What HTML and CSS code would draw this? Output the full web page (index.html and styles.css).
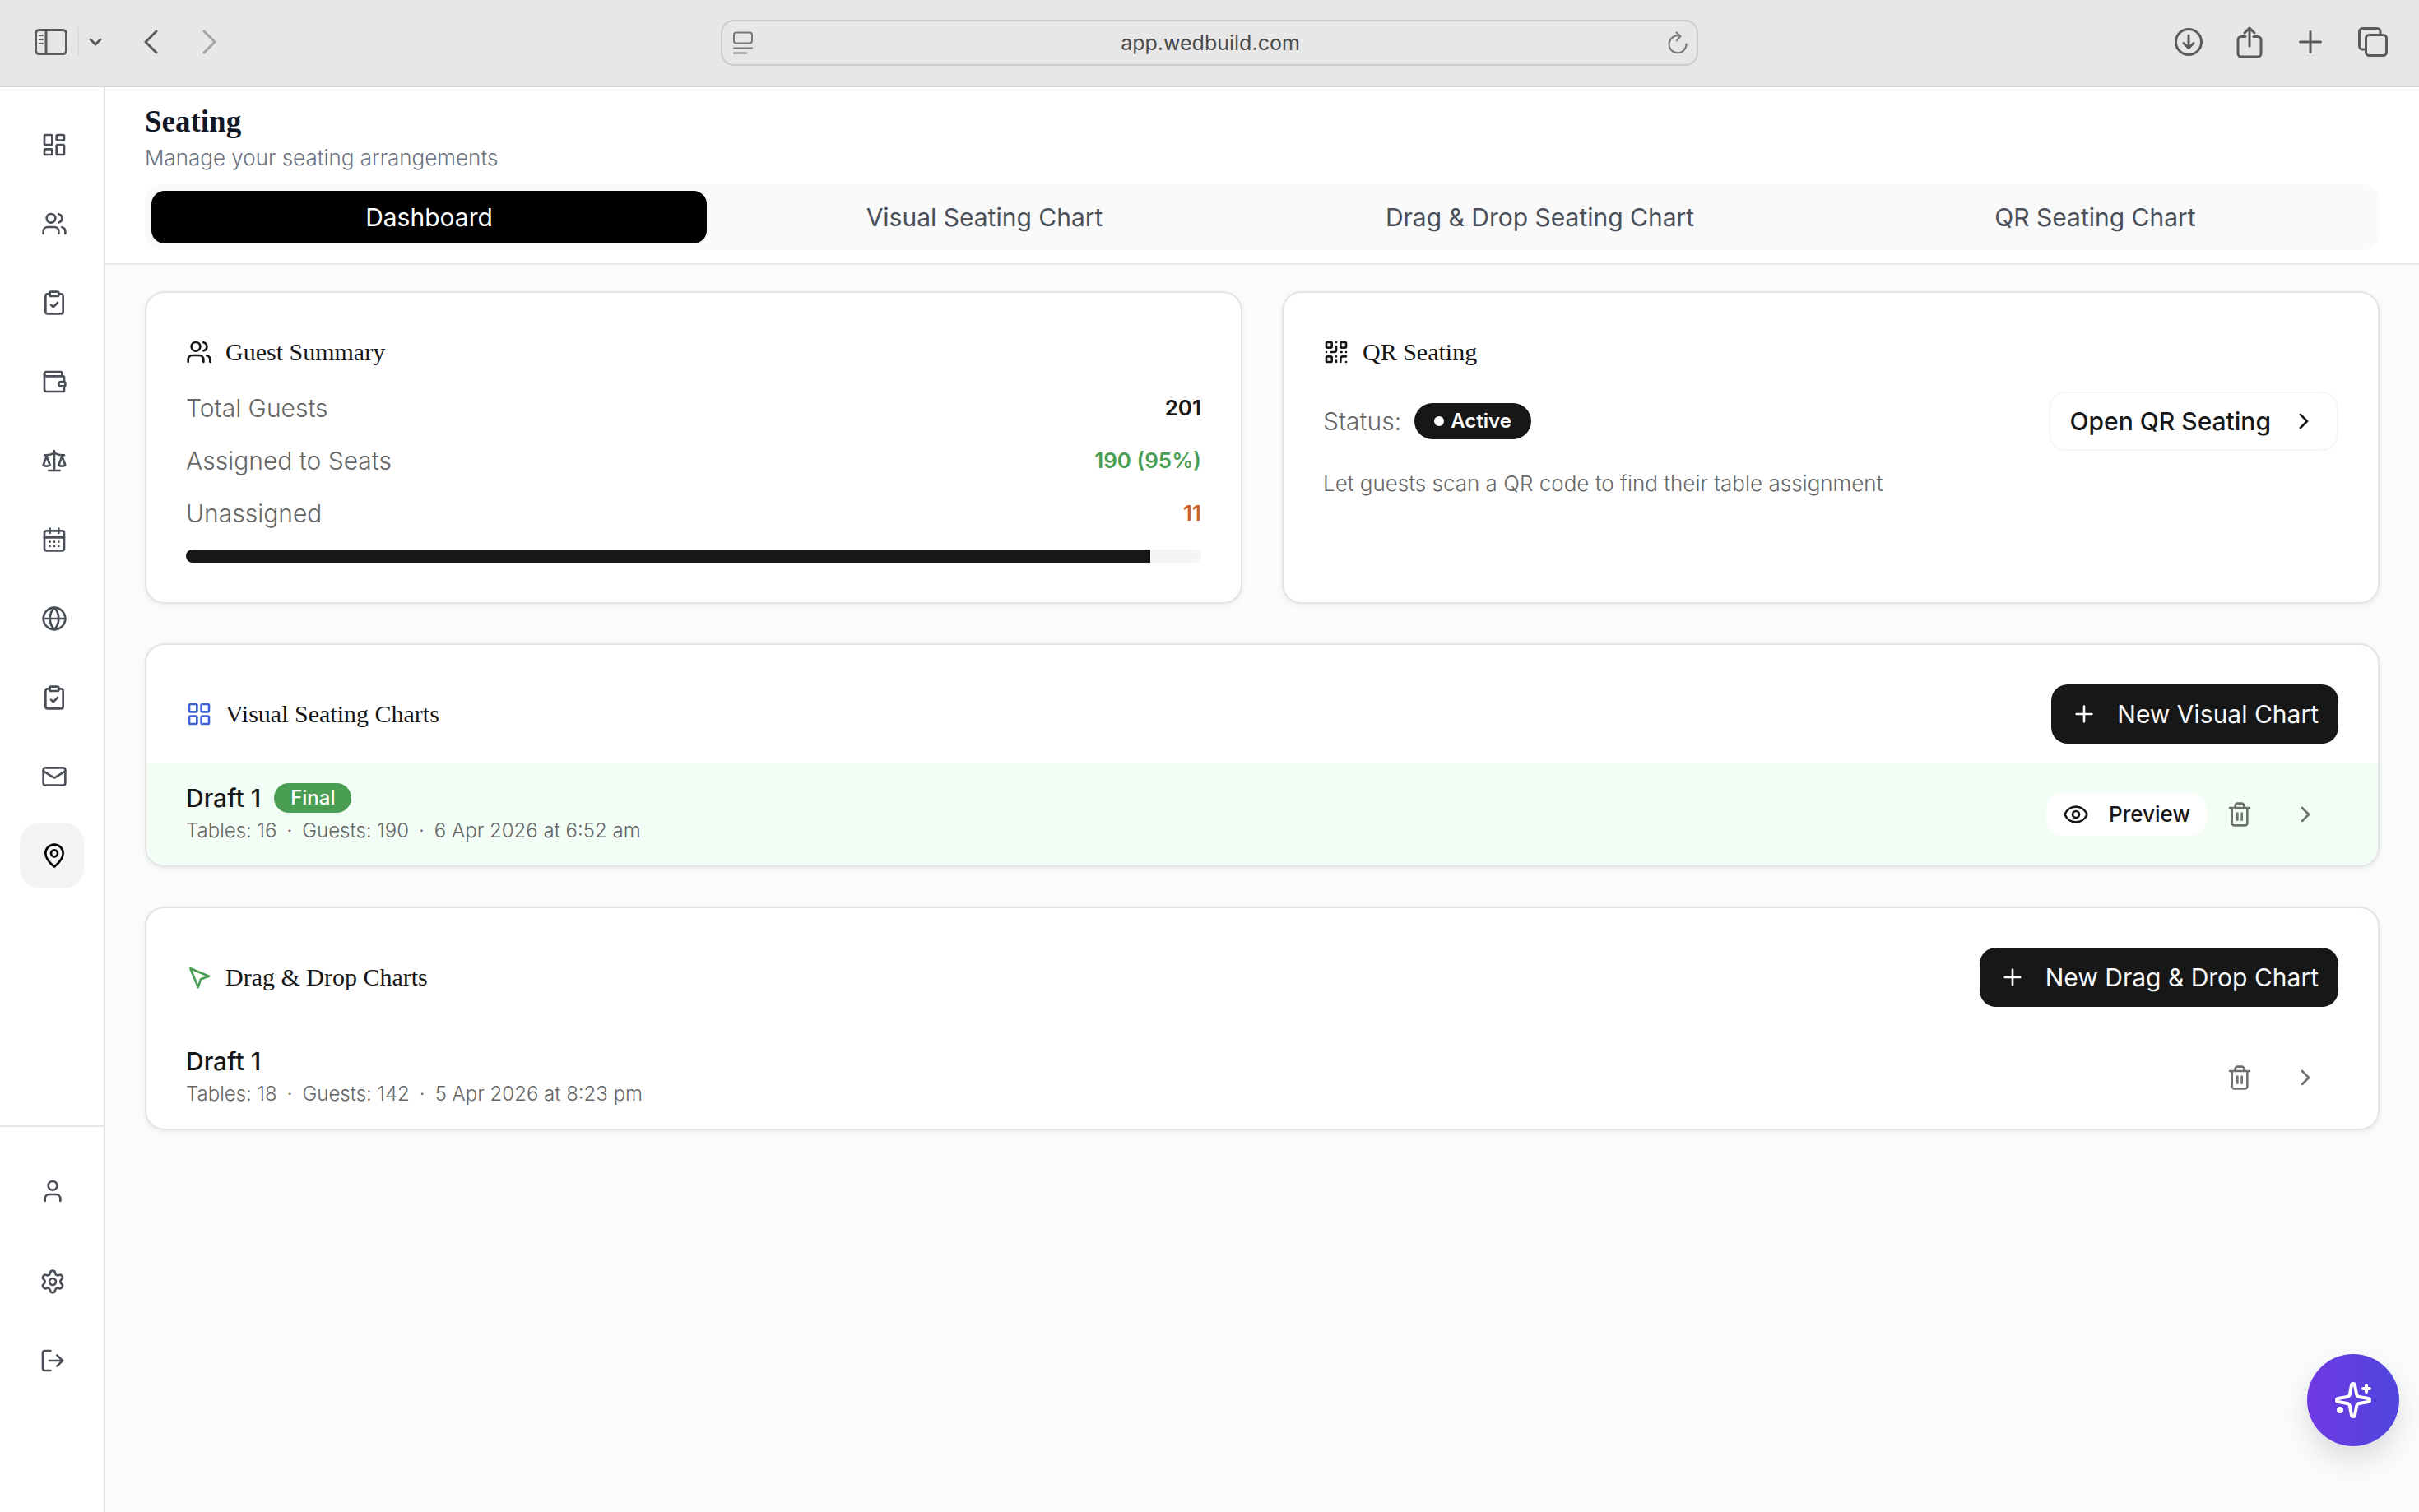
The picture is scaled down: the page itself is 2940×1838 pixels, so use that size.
FILE: index.html
```html
<!DOCTYPE html>
<html lang="en">
  <head>
    <meta charset="UTF-8" />
    <meta name="viewport" content="width=device-width, initial-scale=1.0" />
    <title>Seating</title>
    <link rel="stylesheet" href="styles.css">
  </head>
  <body>
    <!-- Shared icons -->
    <svg class="sprite" aria-hidden="true">
      <symbol id="i-dashboard" viewBox="0 0 24 24"><rect width="7" height="9" x="3" y="3" rx="1" /><rect width="7" height="5" x="14" y="3" rx="1" /><rect width="7" height="9" x="14" y="12" rx="1" /><rect width="7" height="5" x="3" y="16" rx="1" /></symbol>
      <symbol id="i-users" viewBox="0 0 24 24"><path d="M16 21v-2a4 4 0 0 0-4-4H6a4 4 0 0 0-4 4v2" /><circle cx="9" cy="7" r="4" /><path d="M22 21v-2a4 4 0 0 0-3-3.87" /><path d="M16 3.13a4 4 0 0 1 0 7.75" /></symbol>
      <symbol id="i-clipboard" viewBox="0 0 24 24"><rect width="8" height="4" x="8" y="2" rx="1" /><path d="M16 4h2a2 2 0 0 1 2 2v14a2 2 0 0 1-2 2H6a2 2 0 0 1-2-2V6a2 2 0 0 1 2-2h2" /><path d="m9 14 2 2 4-4" /></symbol>
      <symbol id="i-wallet" viewBox="0 0 24 24"><path d="M19 7V4a1 1 0 0 0-1-1H5a2 2 0 0 0 0 4h15a1 1 0 0 1 1 1v4h-3a2 2 0 0 0 0 4h3a1 1 0 0 0 1-1v-2a1 1 0 0 0-1-1" /><path d="M3 5v14a2 2 0 0 0 2 2h15a1 1 0 0 0 1-1v-4" /></symbol>
      <symbol id="i-scale" viewBox="0 0 24 24"><path d="m16 16 3-8 3 8c-.87.65-1.92 1-3 1s-2.13-.35-3-1Z" /><path d="m2 16 3-8 3 8c-.87.65-1.92 1-3 1s-2.13-.35-3-1Z" /><path d="M7 21h10" /><path d="M12 3v18" /><path d="M3 7h2c2 0 5-1 7-2 2 1 5 2 7 2h2" /></symbol>
      <symbol id="i-calendar" viewBox="0 0 24 24"><path d="M8 2v4M16 2v4" /><rect width="18" height="18" x="3" y="4" rx="2" /><path d="M3 10h18M8 14h.01M12 14h.01M16 14h.01M8 18h.01M12 18h.01M16 18h.01" /></symbol>
      <symbol id="i-globe" viewBox="0 0 24 24"><circle cx="12" cy="12" r="10" /><path d="M12 2a14.5 14.5 0 0 0 0 20 14.5 14.5 0 0 0 0-20" /><path d="M2 12h20" /></symbol>
      <symbol id="i-mail" viewBox="0 0 24 24"><rect width="20" height="16" x="2" y="4" rx="2" /><path d="m22 7-8.97 5.7a1.94 1.94 0 0 1-2.06 0L2 7" /></symbol>
      <symbol id="i-pin" viewBox="0 0 24 24"><path d="M20 10c0 4.993-5.539 10.193-7.399 11.799a1 1 0 0 1-1.202 0C9.539 20.193 4 14.993 4 10a8 8 0 0 1 16 0" /><circle cx="12" cy="10" r="3" /></symbol>
      <symbol id="i-user" viewBox="0 0 24 24"><path d="M19 21v-2a4 4 0 0 0-4-4H9a4 4 0 0 0-4 4v2" /><circle cx="12" cy="7" r="4" /></symbol>
      <symbol id="i-settings" viewBox="0 0 24 24"><path d="M9.671 4.136a2.34 2.34 0 0 1 4.659 0 2.34 2.34 0 0 0 3.319 1.915 2.34 2.34 0 0 1 2.33 4.033 2.34 2.34 0 0 0 0 3.831 2.34 2.34 0 0 1-2.33 4.033 2.34 2.34 0 0 0-3.319 1.915 2.34 2.34 0 0 1-4.659 0 2.34 2.34 0 0 0-3.32-1.915 2.34 2.34 0 0 1-2.33-4.033 2.34 2.34 0 0 0 0-3.831A2.34 2.34 0 0 1 6.35 6.051a2.34 2.34 0 0 0 3.319-1.915" /><circle cx="12" cy="12" r="3" /></symbol>
      <symbol id="i-logout" viewBox="0 0 24 24"><path d="M10 3H5a2 2 0 0 0-2 2v14a2 2 0 0 0 2 2h5" /><path d="m16 17 5-5-5-5" /><path d="M21 12H9" /></symbol>
      <symbol id="i-qr" viewBox="0 0 24 24"><rect width="5" height="5" x="3" y="3" rx="1" /><rect width="5" height="5" x="16" y="3" rx="1" /><rect width="5" height="5" x="3" y="16" rx="1" /><path d="M21 16h-3a2 2 0 0 0-2 2v3M21 21v.01M12 7v3a2 2 0 0 1-2 2H7M3 12h.01M12 3h.01M12 16v.01M16 12h1M21 12v.01M12 21v-1" /></symbol>
      <symbol id="i-grid" viewBox="0 0 24 24"><rect width="7" height="7" x="3" y="3" rx="1" /><rect width="7" height="7" x="14" y="3" rx="1" /><rect width="7" height="7" x="14" y="14" rx="1" /><rect width="7" height="7" x="3" y="14" rx="1" /></symbol>
      <symbol id="i-pointer" viewBox="0 0 24 24"><path d="m4 4 7.07 17 2.51-7.39L21 11.07z" /></symbol>
      <symbol id="i-plus" viewBox="0 0 24 24"><path d="M5 12h14M12 5v14" /></symbol>
      <symbol id="i-chevron" viewBox="0 0 24 24"><path d="m9 18 6-6-6-6" /></symbol>
      <symbol id="i-eye" viewBox="0 0 24 24"><path d="M2.062 12.348a1 1 0 0 1 0-.696 10.75 10.75 0 0 1 19.876 0 1 1 0 0 1 0 .696 10.75 10.75 0 0 1-19.876 0" /><circle cx="12" cy="12" r="3" /></symbol>
      <symbol id="i-trash" viewBox="0 0 24 24"><path d="M3 6h18M19 6v14c0 1-1 2-2 2H7c-1 0-2-1-2-2V6M8 6V4c0-1 1-2 2-2h4c1 0 2 1 2 2v2M10 11v6M14 11v6" /></symbol>
      <symbol id="i-sparkles" viewBox="0 0 24 24"><path d="M11.017 2.814a1 1 0 0 1 1.966 0l1.051 5.558a2 2 0 0 0 1.594 1.594l5.558 1.051a1 1 0 0 1 0 1.966l-5.558 1.051a2 2 0 0 0-1.594 1.594l-1.051 5.558a1 1 0 0 1-1.966 0l-1.051-5.558a2 2 0 0 0-1.594-1.594l-5.558-1.051a1 1 0 0 1 0-1.966l5.558-1.051a2 2 0 0 0 1.594-1.594z" /><path d="M20 3v4M22 5h-4" /><circle cx="4" cy="18" r="1" /></symbol>
    </svg>

    <header class="toolbar">
      <div class="toolbar-left">
        <button class="tool" aria-label="Sidebar">
          <svg width="40" height="32" viewBox="0 0 40 32"><rect x="1.5" y="1.5" width="37" height="29" rx="4" /><path d="M14 2v28" /><path class="thin" d="M6 8h4M6 13h4M6 18h4" /></svg>
        </button>
        <span class="tool-divider"></span>
        <button class="tool" aria-label="Tab groups">
          <svg width="16" height="10" viewBox="0 0 16 10"><path d="m2 2 6 6 6-6" /></svg>
        </button>
        <button class="tool tool-back" aria-label="Back">
          <svg width="18" height="30" viewBox="0 0 18 30"><path d="M16 2 3 15l13 13" /></svg>
        </button>
        <button class="tool tool-forward" aria-label="Forward" disabled>
          <svg width="18" height="30" viewBox="0 0 18 30"><path d="m2 2 13 13L2 28" /></svg>
        </button>
      </div>
      <form class="address">
        <svg width="26" height="28" viewBox="0 0 26 28"><rect x="2" y="1.5" width="22" height="13" rx="3" /><path d="M2 20.5h22M2 26.5h15" /></svg>
        <input type="text" value="app.wedbuild.com" aria-label="Address" />
        <button type="button" class="tool" aria-label="Reload">
          <svg width="26" height="28" viewBox="0 0 26 28"><path d="M23.5 15.5A10.5 10.5 0 1 1 15 5.5M11.5 1.5l5 4.5-4.5 5.5" /></svg>
        </button>
      </form>
      <div class="toolbar-right">
        <button class="tool" aria-label="Downloads">
          <svg width="36" height="36" viewBox="0 0 36 36"><circle cx="18" cy="18" r="15.5" /><path d="M18 10v15M12 19.5l6 6 6-6" /></svg>
        </button>
        <button class="tool" aria-label="Share">
          <svg width="32" height="38" viewBox="0 0 32 38"><path d="M11 12.5H6a4 4 0 0 0-4 4V33a4 4 0 0 0 4 4h20a4 4 0 0 0 4-4V16.5a4 4 0 0 0-4-4h-5M16 24V2M10 8l6-6 6 6" /></svg>
        </button>
        <button class="tool tool-new" aria-label="New tab">
          <svg width="28" height="28" viewBox="0 0 28 28"><path d="M14 1.5v25M1.5 14h25" /></svg>
        </button>
        <button class="tool tool-tabs" aria-label="Show tabs">
          <svg width="36" height="36" viewBox="0 0 36 36"><rect x="9.5" y="9.5" width="25" height="25" rx="4" /><path d="M9 27H5.5a4 4 0 0 1-4-4V5.5a4 4 0 0 1 4-4H23a4 4 0 0 1 4 4V9" /></svg>
        </button>
      </div>
    </header>

    <div class="app">
      <aside class="sidebar">
        <nav class="nav-main" aria-label="Main">
          <a class="nav-link" href="#" aria-label="Dashboard"><svg class="icon"><use href="#i-dashboard" /></svg></a>
          <a class="nav-link" href="#" aria-label="Guests"><svg class="icon"><use href="#i-users" /></svg></a>
          <a class="nav-link" href="#" aria-label="Checklist"><svg class="icon"><use href="#i-clipboard" /></svg></a>
          <a class="nav-link" href="#" aria-label="Budget"><svg class="icon"><use href="#i-wallet" /></svg></a>
          <a class="nav-link" href="#" aria-label="Compare"><svg class="icon"><use href="#i-scale" /></svg></a>
          <a class="nav-link" href="#" aria-label="Calendar"><svg class="icon"><use href="#i-calendar" /></svg></a>
          <a class="nav-link" href="#" aria-label="Website"><svg class="icon"><use href="#i-globe" /></svg></a>
          <a class="nav-link" href="#" aria-label="Tasks"><svg class="icon"><use href="#i-clipboard" /></svg></a>
          <a class="nav-link" href="#" aria-label="Invitations"><svg class="icon"><use href="#i-mail" /></svg></a>
          <a class="nav-link active" href="#" aria-label="Seating" aria-current="page"><svg class="icon"><use href="#i-pin" /></svg></a>
        </nav>
        <nav class="nav-bottom" aria-label="Account">
          <a class="nav-link nav-profile" href="#" aria-label="Profile"><svg class="icon"><use href="#i-user" /></svg></a>
          <a class="nav-link" href="#" aria-label="Settings"><svg class="icon"><use href="#i-settings" /></svg></a>
          <a class="nav-link" href="#" aria-label="Log out"><svg class="icon"><use href="#i-logout" /></svg></a>
        </nav>
      </aside>

      <div class="page">
        <div class="page-header">
          <h1>Seating</h1>
          <p class="subtitle">Manage your seating arrangements</p>
          <div class="tabs" role="tablist">
            <button class="tab active" role="tab" aria-selected="true">Dashboard</button>
            <button class="tab" role="tab">Visual Seating Chart</button>
            <button class="tab" role="tab">Drag &amp; Drop Seating Chart</button>
            <button class="tab" role="tab">QR Seating Chart</button>
          </div>
        </div>

        <main class="content">
          <div class="summary-grid">
            <section class="card card-body">
              <h2><svg class="icon"><use href="#i-users" /></svg>Guest Summary</h2>
              <div class="stat"><span>Total Guests</span><strong>201</strong></div>
              <div class="stat"><span>Assigned to Seats</span><strong class="green">190 (95%)</strong></div>
              <div class="stat"><span>Unassigned</span><strong class="orange">11</strong></div>
              <div class="progress" role="progressbar" aria-label="Assigned guests" aria-valuenow="95">
                <div class="progress-fill" style="width: 95%"></div>
              </div>
            </section>

            <section class="card card-body">
              <h2><svg class="icon"><use href="#i-qr" /></svg>QR Seating</h2>
              <div class="status-row">
                <span class="status-label">Status:</span>
                <span class="badge badge-active"><span class="dot"></span>Active</span>
                <button class="btn btn-outline">Open QR Seating<svg class="icon"><use href="#i-chevron" /></svg></button>
              </div>
              <p class="hint">Let guests scan a QR code to find their table assignment</p>
            </section>
          </div>

          <section class="card">
            <div class="card-header">
              <h2><svg class="icon blue"><use href="#i-grid" /></svg>Visual Seating Charts</h2>
              <button class="btn btn-primary"><svg class="icon"><use href="#i-plus" /></svg>New Visual Chart</button>
            </div>
            <div class="chart-row final">
              <div class="chart-info">
                <div class="chart-name">Draft 1 <span class="badge badge-final">Final</span></div>
                <div class="chart-meta"><span>Tables: 16</span><span>·</span><span>Guests: 190</span><span>·</span><span>6 Apr 2026 at 6:52 am</span></div>
              </div>
              <div class="chart-actions">
                <button class="btn-preview"><svg class="icon"><use href="#i-eye" /></svg>Preview</button>
                <button class="btn-icon" aria-label="Delete"><svg class="icon"><use href="#i-trash" /></svg></button>
                <button class="btn-icon btn-open" aria-label="Open"><svg class="icon"><use href="#i-chevron" /></svg></button>
              </div>
            </div>
          </section>

          <section class="card">
            <div class="card-header">
              <h2><svg class="icon green"><use href="#i-pointer" /></svg>Drag &amp; Drop Charts</h2>
              <button class="btn btn-primary"><svg class="icon"><use href="#i-plus" /></svg>New Drag &amp; Drop Chart</button>
            </div>
            <div class="chart-row">
              <div class="chart-info">
                <div class="chart-name">Draft 1</div>
                <div class="chart-meta"><span>Tables: 18</span><span>·</span><span>Guests: 142</span><span>·</span><span>5 Apr 2026 at 8:23 pm</span></div>
              </div>
              <div class="chart-actions">
                <button class="btn-icon" aria-label="Delete"><svg class="icon"><use href="#i-trash" /></svg></button>
                <button class="btn-icon btn-open" aria-label="Open"><svg class="icon"><use href="#i-chevron" /></svg></button>
              </div>
            </div>
          </section>
        </main>
      </div>
    </div>

    <button class="fab" aria-label="Assistant"><svg class="icon"><use href="#i-sparkles" /></svg></button>
  </body>
</html>
```

FILE: styles.css
```css
* {
  box-sizing: border-box;
}
body {
  margin: 0;
  min-height: 100vh;
  display: flex;
  flex-direction: column;
  font-family: Inter, "Open Sans", sans-serif;
  font-size: 30px;
  line-height: 40px;
  color: #171717;
  background: #fafbfd;
}
h1,
h2,
p {
  margin: 0;
}
button,
input {
  font: inherit;
  color: inherit;
  border: none;
  background: none;
  padding: 0;
}
button {
  cursor: pointer;
}
.sprite {
  display: none;
}
.icon {
  width: 32px;
  height: 32px;
  flex-shrink: 0;
  fill: none;
  stroke: currentColor;
  stroke-width: 2;
  stroke-linecap: round;
  stroke-linejoin: round;
}
.green {
  color: #4a9e54;
}
.orange {
  color: #c9622c;
}
.blue {
  color: #3f63d3;
}

/* Browser toolbar */
.toolbar {
  display: grid;
  grid-template-columns: 1fr minmax(300px, 1188px) 1fr;
  align-items: center;
  height: 106px;
  padding: 0 38px;
  background: #e7e7e7;
  border-bottom: 2px solid #d8d8d8;
  color: #5a5a5a;
}
.toolbar-left,
.toolbar-right {
  display: flex;
  align-items: center;
  padding-bottom: 2px;
}
.toolbar-right {
  justify-content: flex-end;
  gap: 40px;
}
.tool {
  display: flex;
}
.toolbar svg {
  fill: none;
  stroke: currentColor;
  stroke-width: 3;
  stroke-linecap: round;
  stroke-linejoin: round;
}
.toolbar .thin {
  stroke-width: 2;
}
.toolbar-left .tool:first-child {
  margin-left: 4px;
}
.tool-divider {
  width: 2px;
  height: 36px;
  margin: 0 12px;
  background: #dcdcdc;
}
.tool-back {
  margin-left: 50px;
}
.tool-forward {
  margin-left: 54px;
  color: #a3a3a3;
}
.tool-new,
.tool-tabs {
  margin-left: 4px;
}
.address {
  display: flex;
  align-items: center;
  height: 56px;
  padding: 0 10px 0 12px;
  border: 2px solid #cccccc;
  border-radius: 16px;
  color: #777777;
}
.address input {
  flex: 1;
  min-width: 0;
  font-size: 25px;
  text-align: center;
  color: #4a4a4a;
}
.address svg {
  stroke-width: 2;
}

.app {
  flex: 1;
  display: flex;
}

/* Sidebar */
.sidebar {
  width: 128px;
  display: flex;
  flex-direction: column;
  justify-content: space-between;
  background: #ffffff;
  border-right: 2px solid #e5e5e5;
}
.nav-main,
.nav-bottom {
  display: flex;
  flex-direction: column;
  gap: 16px;
  padding: 30px 24px;
}
.nav-bottom {
  padding: 38px 24px 144px;
  border-top: 2px solid #e5e5e5;
}
.nav-profile {
  margin-bottom: 14px;
}
.nav-link {
  display: flex;
  align-items: center;
  justify-content: center;
  height: 80px;
  padding-left: 2px;
  border-radius: 24px;
  color: #4b4f58;
}
.nav-main .nav-link {
  padding-left: 6px;
}
.nav-link.active {
  background: #f3f4f6;
  color: #000000;
}

/* Page header */
.page {
  flex: 1;
  min-width: 0;
}
.page-header {
  padding: 20px 48px 16px;
  background: #ffffff;
  border-bottom: 2px solid #e5e7eb;
}
h1 {
  font-family: "Liberation Serif", serif;
  font-size: 37px;
  line-height: 44px;
  color: #111827;
}
.subtitle {
  margin-top: 4px;
  font-size: 26px;
  line-height: 36px;
  font-weight: 300;
  color: #6b7280;
}
.tabs {
  display: grid;
  grid-template-columns: repeat(4, 1fr);
  margin-top: 14px;
  padding: 8px;
  border-radius: 20px;
  background: #fafafa;
}
.tab {
  height: 64px;
  border-radius: 16px;
  color: #4b4f58;
}
.tab.active {
  background: #000000;
  color: #ffffff;
}

/* Cards */
.content {
  display: flex;
  flex-direction: column;
  gap: 48px;
  padding: 32px 48px;
}
.summary-grid {
  display: grid;
  grid-template-columns: 1fr 1fr;
  gap: 48px;
}
.card {
  overflow: hidden;
  background: #ffffff;
  border: 2px solid #e5e5e5;
  border-radius: 24px;
  box-shadow: 0 2px 6px rgba(0, 0, 0, 0.07);
}
.card-body {
  display: flex;
  flex-direction: column;
  gap: 24px;
  padding: 48px;
}
.card-header {
  display: flex;
  align-items: center;
  justify-content: space-between;
  padding: 48px 48px 24px;
}
h2 {
  display: flex;
  align-items: center;
  gap: 16px;
  font-family: "Liberation Serif", serif;
  font-size: 30px;
  line-height: 48px;
  font-weight: 500;
}
.stat {
  display: flex;
  justify-content: space-between;
}
.stat span,
.status-label {
  font-weight: 300;
  color: #666666;
}
.stat strong {
  font-size: 26px;
  font-weight: 600;
}
.progress {
  height: 16px;
  overflow: hidden;
  border-radius: 8px;
  background: #f5f5f5;
}
.progress-fill {
  height: 100%;
  background: #171717;
}
.status-row {
  display: flex;
  align-items: center;
  gap: 16px;
}
.status-row .btn {
  margin-left: auto;
}
.hint {
  font-size: 26px;
  line-height: 32px;
  font-weight: 300;
  color: #666666;
}

.badge {
  display: inline-flex;
  align-items: center;
  gap: 8px;
  height: 36px;
  padding: 0 20px;
  border-radius: 24px;
  font-size: 24px;
  font-weight: 500;
  color: #ffffff;
}
.badge-active {
  height: 44px;
  padding: 0 24px;
  font-weight: 600;
  background: #171717;
}
.badge-final {
  background: #4a9e54;
}
.dot {
  width: 12px;
  height: 12px;
  border-radius: 50%;
  background: #ffffff;
}

.btn {
  display: flex;
  align-items: center;
  gap: 24px;
  height: 72px;
  padding: 0 24px;
  border-radius: 20px;
}
.btn-primary {
  background: #171717;
  color: #fafafa;
}
.btn-outline {
  border: 2px solid #f5f5f5;
  font-weight: 500;
}

/* Chart list */
.chart-row {
  display: flex;
  align-items: center;
  justify-content: space-between;
  padding: 22px 48px;
}
.chart-row.final {
  background: #f2fdf5;
}
.chart-name {
  display: flex;
  align-items: center;
  gap: 16px;
  font-weight: 500;
}
.chart-meta {
  display: flex;
  gap: 12px;
  font-size: 24px;
  font-weight: 300;
  color: #666666;
}
.chart-actions {
  display: flex;
  align-items: center;
  gap: 16px;
}
.btn-preview {
  display: flex;
  align-items: center;
  gap: 24px;
  height: 52px;
  padding: 0 20px;
  border-radius: 20px;
  background: #ffffff;
  font-size: 26px;
  font-weight: 500;
}
.btn-icon {
  display: flex;
  align-items: center;
  justify-content: center;
  width: 48px;
  height: 48px;
  color: #6f736f;
}
.btn-open {
  width: 80px;
}

/* Assistant button */
.fab {
  position: fixed;
  right: 24px;
  bottom: 80px;
  display: flex;
  align-items: center;
  justify-content: center;
  width: 112px;
  height: 112px;
  border-radius: 50%;
  background: linear-gradient(to right, #7039e2, #4f46dd);
  color: #ffffff;
  box-shadow: 0 16px 32px rgba(0, 0, 0, 0.12);
}
.fab .icon {
  width: 48px;
  height: 48px;
}
```
